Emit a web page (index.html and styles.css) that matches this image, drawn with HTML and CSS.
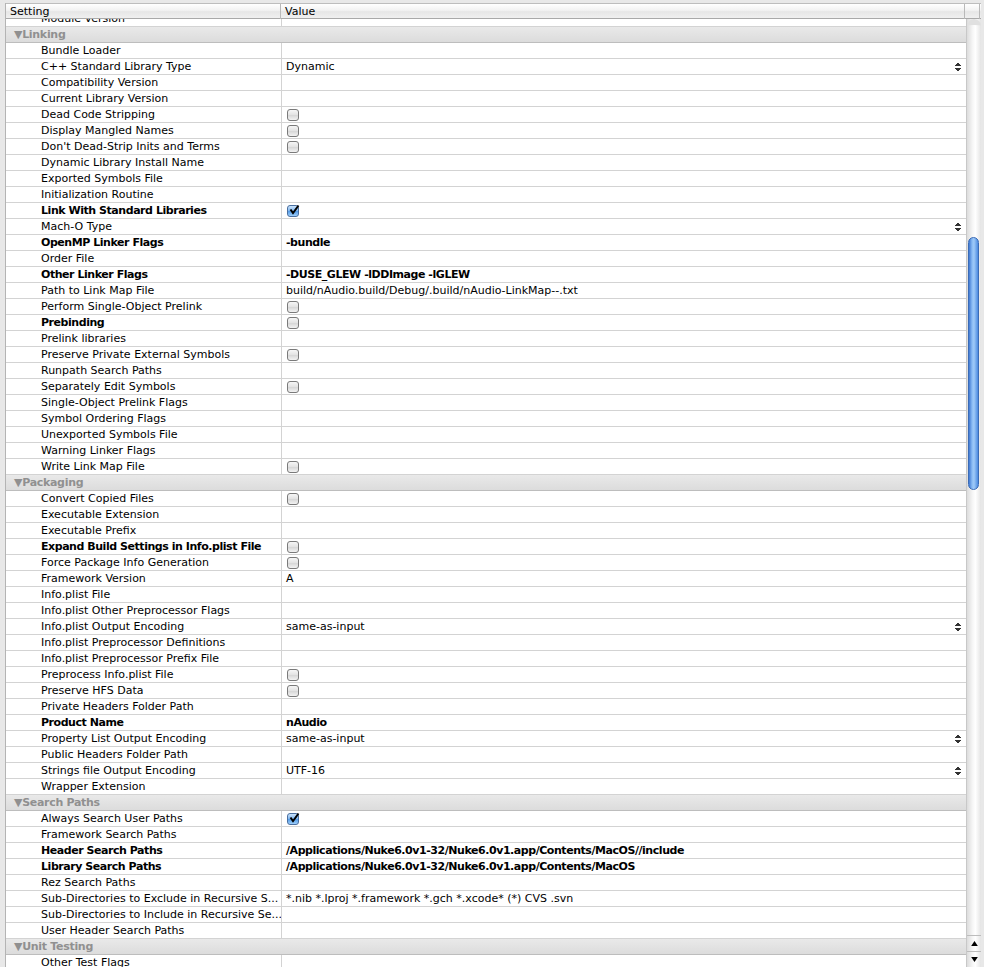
FILE: index.html
```html
<!DOCTYPE html>
<html lang="en">
<head>
    <meta charset="UTF-8">
    <title>Build Settings</title>
    <link rel="stylesheet" href="styles.css">
</head>
<body>
<div class="settings">
    <div class="header">
        <div class="hcell">Setting</div>
        <div class="hcell">Value</div>
        <div class="hcorner"></div>
    </div>
    <div class="body-wrap">
        <div class="viewport">
            <div class="rows">
                <div class="row"><div class="name">Module Version</div><div class="value"></div></div>

                <div class="section">&#9660;Linking</div>
                <div class="row"><div class="name">Bundle Loader</div><div class="value"></div></div>
                <div class="row"><div class="name">C++ Standard Library Type</div><div class="value popup">Dynamic<span class="arrows"></span></div></div>
                <div class="row"><div class="name">Compatibility Version</div><div class="value"></div></div>
                <div class="row"><div class="name">Current Library Version</div><div class="value"></div></div>
                <div class="row"><div class="name">Dead Code Stripping</div><div class="value"><span class="cb"></span></div></div>
                <div class="row"><div class="name">Display Mangled Names</div><div class="value"><span class="cb"></span></div></div>
                <div class="row"><div class="name">Don't Dead-Strip Inits and Terms</div><div class="value"><span class="cb"></span></div></div>
                <div class="row"><div class="name">Dynamic Library Install Name</div><div class="value"></div></div>
                <div class="row"><div class="name">Exported Symbols File</div><div class="value"></div></div>
                <div class="row"><div class="name">Initialization Routine</div><div class="value"></div></div>
                <div class="row bold"><div class="name">Link With Standard Libraries</div><div class="value"><span class="cb checked"><svg viewBox="0 0 12 12" width="12" height="12"><path d="M2.5 5.5 L5 9 L10.5 1.5" fill="none" stroke="#000" stroke-width="2"/></svg></span></div></div>
                <div class="row"><div class="name">Mach-O Type</div><div class="value popup"><span class="arrows"></span></div></div>
                <div class="row bold"><div class="name">OpenMP Linker Flags</div><div class="value">-bundle</div></div>
                <div class="row"><div class="name">Order File</div><div class="value"></div></div>
                <div class="row bold"><div class="name">Other Linker Flags</div><div class="value">-DUSE_GLEW -lDDImage -lGLEW</div></div>
                <div class="row"><div class="name">Path to Link Map File</div><div class="value">build/nAudio.build/Debug/.build/nAudio-LinkMap--.txt</div></div>
                <div class="row"><div class="name">Perform Single-Object Prelink</div><div class="value"><span class="cb"></span></div></div>
                <div class="row bold"><div class="name">Prebinding</div><div class="value"><span class="cb"></span></div></div>
                <div class="row"><div class="name">Prelink libraries</div><div class="value"></div></div>
                <div class="row"><div class="name">Preserve Private External Symbols</div><div class="value"><span class="cb"></span></div></div>
                <div class="row"><div class="name">Runpath Search Paths</div><div class="value"></div></div>
                <div class="row"><div class="name">Separately Edit Symbols</div><div class="value"><span class="cb"></span></div></div>
                <div class="row"><div class="name">Single-Object Prelink Flags</div><div class="value"></div></div>
                <div class="row"><div class="name">Symbol Ordering Flags</div><div class="value"></div></div>
                <div class="row"><div class="name">Unexported Symbols File</div><div class="value"></div></div>
                <div class="row"><div class="name">Warning Linker Flags</div><div class="value"></div></div>
                <div class="row"><div class="name">Write Link Map File</div><div class="value"><span class="cb"></span></div></div>

                <div class="section">&#9660;Packaging</div>
                <div class="row"><div class="name">Convert Copied Files</div><div class="value"><span class="cb"></span></div></div>
                <div class="row"><div class="name">Executable Extension</div><div class="value"></div></div>
                <div class="row"><div class="name">Executable Prefix</div><div class="value"></div></div>
                <div class="row bold"><div class="name">Expand Build Settings in Info.plist File</div><div class="value"><span class="cb"></span></div></div>
                <div class="row"><div class="name">Force Package Info Generation</div><div class="value"><span class="cb"></span></div></div>
                <div class="row"><div class="name">Framework Version</div><div class="value">A</div></div>
                <div class="row"><div class="name">Info.plist File</div><div class="value"></div></div>
                <div class="row"><div class="name">Info.plist Other Preprocessor Flags</div><div class="value"></div></div>
                <div class="row"><div class="name">Info.plist Output Encoding</div><div class="value popup">same-as-input<span class="arrows"></span></div></div>
                <div class="row"><div class="name">Info.plist Preprocessor Definitions</div><div class="value"></div></div>
                <div class="row"><div class="name">Info.plist Preprocessor Prefix File</div><div class="value"></div></div>
                <div class="row"><div class="name">Preprocess Info.plist File</div><div class="value"><span class="cb"></span></div></div>
                <div class="row"><div class="name">Preserve HFS Data</div><div class="value"><span class="cb"></span></div></div>
                <div class="row"><div class="name">Private Headers Folder Path</div><div class="value"></div></div>
                <div class="row bold"><div class="name">Product Name</div><div class="value">nAudio</div></div>
                <div class="row"><div class="name">Property List Output Encoding</div><div class="value popup">same-as-input<span class="arrows"></span></div></div>
                <div class="row"><div class="name">Public Headers Folder Path</div><div class="value"></div></div>
                <div class="row"><div class="name">Strings file Output Encoding</div><div class="value popup">UTF-16<span class="arrows"></span></div></div>
                <div class="row"><div class="name">Wrapper Extension</div><div class="value"></div></div>

                <div class="section">&#9660;Search Paths</div>
                <div class="row"><div class="name">Always Search User Paths</div><div class="value"><span class="cb checked"><svg viewBox="0 0 12 12" width="12" height="12"><path d="M2.5 5.5 L5 9 L10.5 1.5" fill="none" stroke="#000" stroke-width="2"/></svg></span></div></div>
                <div class="row"><div class="name">Framework Search Paths</div><div class="value"></div></div>
                <div class="row bold"><div class="name">Header Search Paths</div><div class="value">/Applications/Nuke6.0v1-32/Nuke6.0v1.app/Contents/MacOS//include</div></div>
                <div class="row bold"><div class="name">Library Search Paths</div><div class="value">/Applications/Nuke6.0v1-32/Nuke6.0v1.app/Contents/MacOS</div></div>
                <div class="row"><div class="name">Rez Search Paths</div><div class="value"></div></div>
                <div class="row"><div class="name">Sub-Directories to Exclude in Recursive S...</div><div class="value">*.nib *.lproj *.framework *.gch *.xcode* (*) CVS .svn</div></div>
                <div class="row"><div class="name">Sub-Directories to Include in Recursive Se...</div><div class="value"></div></div>
                <div class="row"><div class="name">User Header Search Paths</div><div class="value"></div></div>

                <div class="section">&#9660;Unit Testing</div>
                <div class="row"><div class="name">Other Test Flags</div><div class="value"></div></div>
            </div>
        </div>
        <div class="scrollbar">
            <div class="track">
                <div class="thumb"></div>
            </div>
            <div class="sb-button"><svg viewBox="0 0 8 6" width="7" height="5"><path d="M4 0 L8 6 L0 6 Z" fill="#000"/></svg></div>
            <div class="sb-button"><svg viewBox="0 0 8 6" width="7" height="5"><path d="M0 0 L8 0 L4 6 Z" fill="#000"/></svg></div>
        </div>
    </div>
</div>
</body>
</html>
```

FILE: styles.css
```css
body {
    margin: 0;
    background-color: #e8e8e8;
    font-family: "DejaVu Sans", Verdana, sans-serif;
    font-size: 11px;
    color: #000;
}
.settings {
    margin: 3px 4px 0 5px;
    width: 975px;
    border-left: 1px solid #b4b4b4;
    background-color: #fff;
}
/* header */
.header {
    display: grid;
    grid-template-columns: 275px 684px 15px;
    height: 14px;
    border-top: 1px solid #bdbdbd;
    border-bottom: 1px solid #a9a9a9;
    background: linear-gradient(#ffffff, #f2f2f2 45%, #e6e6e6 55%, #f0f0f0);
}
.hcell {
    padding-left: 4px;
    line-height: 15px;
    border-right: 1px solid #b9b9b9;
}
.hcorner {
    border-right: 1px solid #b9b9b9;
}
.body-wrap {
    display: flex;
    height: 948px;
}
.viewport {
    flex: 1;
    overflow: hidden;
}
.rows {
    margin-top: -8px;
}
.row {
    display: grid;
    grid-template-columns: 276px 1fr;
    height: 16px;
    box-sizing: border-box;
    border-bottom: 1px solid #d3d3d3;
    line-height: 15px;
}
.row.bold {
    font-weight: bold;
    letter-spacing: -0.45px;
}
.name {
    padding-left: 35px;
    border-right: 1px solid #d3d3d3;
    white-space: nowrap;
    overflow: hidden;
}
.value {
    padding-left: 4px;
    white-space: nowrap;
    overflow: hidden;
    display: flex;
    align-items: center;
}
.popup {
    padding-right: 5px;
}
.arrows {
    margin-left: auto;
    width: 6px;
    height: 10px;
    background:
        linear-gradient(to bottom right, transparent 50%, #333 50%) 0 0 / 3px 4px no-repeat,
        linear-gradient(to bottom left, transparent 50%, #333 50%) 3px 0 / 3px 4px no-repeat,
        linear-gradient(to top right, transparent 50%, #333 50%) 0 6px / 3px 4px no-repeat,
        linear-gradient(to top left, transparent 50%, #333 50%) 3px 6px / 3px 4px no-repeat;
}
/* checkboxes */
.cb {
    display: inline-block;
    width: 10px;
    height: 10px;
    margin-left: 1px;
    border: 1px solid #7a7a7a;
    border-radius: 3px;
    background: linear-gradient(#f6f6f6, #e2e2e2 50%, #d6d6d6 51%, #f2f2f2);
    position: relative;
}
.cb.checked {
    border-color: #4a6fa0;
    background: linear-gradient(#cbe3fb, #7fb6ef 50%, #4f98e6 51%, #9fd0fb);
}
.cb svg {
    position: absolute;
    left: 0;
    top: -2px;
}
/* section headers */
.section {
    height: 16px;
    box-sizing: border-box;
    padding-left: 8px;
    line-height: 15px;
    font-weight: bold;
    letter-spacing: -0.3px;
    color: #909090;
    border-bottom: 1px solid #bdbdbd;
    background: linear-gradient(#e9e9e9, #dcdcdc);
}
/* scrollbar */
.scrollbar {
    width: 14px;
    display: flex;
    flex-direction: column;
    border-left: 1px solid #c8c8c8;
    background: linear-gradient(to right, #dcdcdc, #f6f6f6 40%, #ffffff 60%, #e4e4e4);
}
.track {
    flex: 1;
    padding-top: 212px;
    border-top: 6px solid #e0e0e0;
    border-radius: 7px 7px 0 0;
}
.thumb {
    width: 11px;
    margin-left: 1px;
    height: 253px;
    border-radius: 6px;
    border: 1px solid #3a6bb6;
    box-sizing: border-box;
    background: linear-gradient(to right, #3f78d2, #8bbcf4 35%, #9fcaf8 55%, #4b8ae0);
}
.sb-button {
    height: 15px;
    display: flex;
    align-items: center;
    justify-content: center;
    border-top: 1px solid #bdbdbd;
}
```
